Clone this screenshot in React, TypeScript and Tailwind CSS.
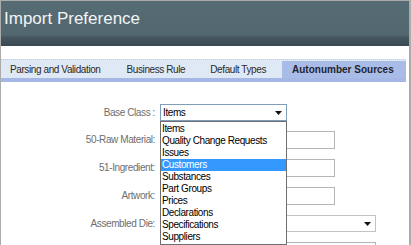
import React from "react";

const FONT = "'Liberation Sans', Arial, sans-serif";

const items = [
  "Items",
  "Quality Change Requests",
  "Issues",
  "Customers",
  "Substances",
  "Part Groups",
  "Prices",
  "Declarations",
  "Specifications",
  "Suppliers",
];

function Arrow() {
  return (
    <svg width="7" height="4" viewBox="0 0 7 4" className="block">
      <path d="M0 0 H7 L3.5 4 Z" fill="#111" />
    </svg>
  );
}

function Row({ label, children }: { label: string; children: React.ReactNode }) {
  return (
    <div className="flex items-center">
      <div className="w-[155px] shrink-0 pr-[1px] text-right text-[10px] leading-none tracking-[-0.4px] text-[#6e6e6e]">
        {label}
      </div>
      <div className="ml-[4px] flex">{children}</div>
    </div>
  );
}

export default function App() {
  return (
    <div
      className="relative h-[245px] w-[411px] overflow-hidden border-l border-t border-r-2 border-[#ababab] bg-white"
      style={{ fontFamily: FONT }}
    >
      <div
        className="h-[45px] w-full pl-[3px] pt-[9px] text-[17px] leading-none text-[#f2f5f6]"
        style={{
          background:
            "linear-gradient(to bottom, #566c75 0%, #52676f 75%, #45565e 82%, #3a4951 100%)",
        }}
      >
        Import Preference
      </div>
      <div className="h-[13px]" />
      <div className="mr-[3px]">
        <div className="flex h-[19px] items-stretch whitespace-nowrap border-t border-dotted border-[#b9cbe8] bg-[#dfe8f5] text-[10px] tracking-[-0.4px] text-[#2a2a2a]">
          <div className="flex items-center pl-[9px] pr-[10px]">Parsing and Validation</div>
          <div className="ml-[6px] flex items-center px-[10px]">Business Rule</div>
          <div className="ml-[5px] flex items-center px-[10px]">Default Types</div>
          <div className="ml-[6px] mt-[1px] flex flex-1 items-center bg-[#a9bce8] pl-[10px] font-bold tracking-normal text-[#1f2430]">
            Autonumber Sources
          </div>
        </div>
        <div className="h-[4px] bg-[#a4b7e5]" />
      </div>

      <div className="relative flex flex-col gap-[10px] pt-[22px]">
        <Row label="Base Class :">
          <div className="relative">
            <div className="flex h-[17px] w-[127px] items-center justify-between border border-[#7f9db9] bg-white pl-[2px] pr-[4px] text-[10px] tracking-[-0.4px] text-black">
              <span>Items</span>
              <Arrow />
            </div>
            <div className="absolute left-0 top-[17px] z-10 w-[127px] border border-[#6f6f6f] bg-white py-[1px] text-[10px] tracking-[-0.4px] text-black">
              {items.map((it) => (
                <div
                  key={it}
                  className={
                    "flex h-[12px] items-center whitespace-nowrap pl-[1px] leading-none " +
                    (it === "Customers" ? "bg-[#3399ff] text-white" : "")
                  }
                >
                  {it}
                </div>
              ))}
            </div>
          </div>
        </Row>
        <Row label="50-Raw Material:">
          <div className="h-[18px] w-[175px] border border-[#b5b5b5] bg-white" />
        </Row>
        <Row label="51-Ingredient:">
          <div className="h-[18px] w-[175px] border border-[#b5b5b5] bg-white" />
        </Row>
        <Row label="Artwork:">
          <div className="h-[18px] w-[175px] border border-[#b5b5b5] bg-white" />
        </Row>
        <Row label="Assembled Die:">
          <div className="flex h-[17px] w-[216px] items-center justify-end border border-[#c3c3c3] bg-white pr-[4px]">
            <Arrow />
          </div>
        </Row>
        <Row label="">
          <div className="h-[18px] w-[216px] border border-[#b5b5b5] bg-white" />
        </Row>
      </div>
    </div>
  );
}
